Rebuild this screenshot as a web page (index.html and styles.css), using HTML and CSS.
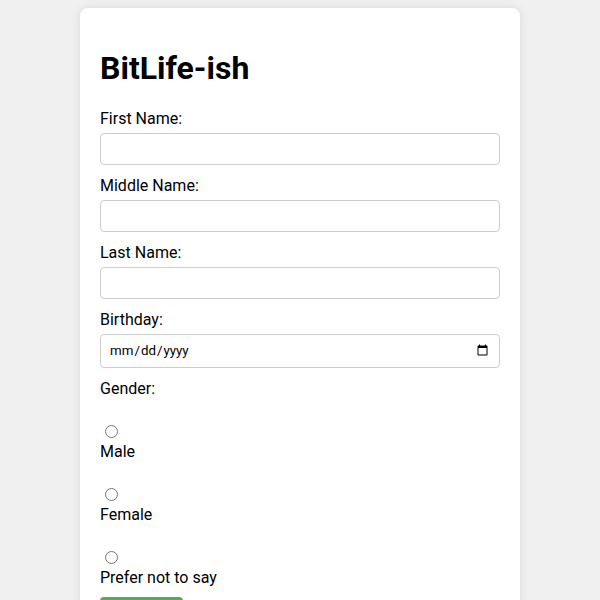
FILE: index.html
```html
<!DOCTYPE html>
<html lang="en">
<head>
<meta charset="utf-8">
<title>BitLife-ish</title>
<link rel="stylesheet" href="styles.css">
</head>
<body>
<div class="card">
  <h1 class="title">BitLife-ish</h1>
  <form class="form">
    <label class="field-label" for="first">First Name:</label>
    <input class="text-input" type="text" id="first">
    <label class="field-label" for="middle">Middle Name:</label>
    <input class="text-input" type="text" id="middle">
    <label class="field-label" for="last">Last Name:</label>
    <input class="text-input" type="text" id="last">
    <label class="field-label" for="birthday">Birthday:</label>
    <input class="date-input" type="date" id="birthday">
    <label class="field-label group-label">Gender:</label>
    <div class="option">
      <input class="radio" type="radio" name="gender" id="male" value="male">
      <label class="option-label" for="male">Male</label>
    </div>
    <div class="option">
      <input class="radio" type="radio" name="gender" id="female" value="female">
      <label class="option-label" for="female">Female</label>
    </div>
    <div class="option">
      <input class="radio" type="radio" name="gender" id="none" value="none">
      <label class="option-label" for="none">Prefer not to say</label>
    </div>
    <button class="submit" type="button">Start Life</button>
  </form>
</div>
</body>
</html>
```

FILE: styles.css
```css
html, body {
  margin: 0;
  padding: 0;
}

body {
  background: #f0f0f0;
  font-family: Roboto, "Liberation Sans", sans-serif;
  color: #000;
  padding-top: 8px;
}

.card {
  box-sizing: border-box;
  width: 440px;
  margin: 0 auto;
  background: #fff;
  border-radius: 8px;
  padding: 20px;
  box-shadow: 0 0 10px rgba(0, 0, 0, 0.1);
  min-height: 700px;
}

.title {
  font-size: 32px;
  font-weight: 700;
  margin: 21.44px 0;
  line-height: normal;
}

.form {
  display: flex;
  flex-direction: column;
  align-items: flex-start;
}

.field-label {
  display: block;
  font-size: 16px;
  line-height: normal;
  margin: 0 0 5.25px 0;
}

.group-label {
  margin-bottom: 0;
}

.text-input,
.date-input {
  box-sizing: border-box;
  width: 100%;
  height: 32px;
  margin: 0 0 10.7px 0;
  padding: 8px;
  border: 1px solid #ccc;
  border-radius: 4px;
  font-family: Roboto, "Liberation Sans", sans-serif;
  font-size: 14px;
  background: #fff;
}

.date-input {
  height: 34px;
  margin-bottom: 11px;
  font-size: 13.33px;
}

.option {
  display: flex;
  flex-direction: column;
  align-items: flex-start;
}

.radio {
  width: 13px;
  height: 13px;
  margin: 27.5px 0 3.5px 5px;
}

.option-label {
  font-size: 16px;
  line-height: normal;
}

.submit {
  margin-top: 10px;
  background: #4caf50;
  color: #fff;
  border: none;
  border-radius: 4px;
  padding: 10px 12px;
  font-family: Roboto, "Liberation Sans", sans-serif;
  font-size: 14px;
  width: 83px;
}
```
